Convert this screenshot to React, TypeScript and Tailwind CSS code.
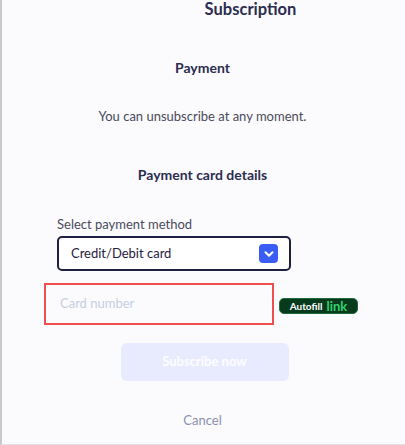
import { ChevronDown } from 'lucide-react';

export default function App() {
  return (
    <div className="w-[405px] h-[445px] bg-[#fbfbfe] border-l-2 border-l-[#c9c9cc] border-b border-b-[#e2e2e6] font-['Lato',sans-serif] text-[#2b2d4f] overflow-hidden">
      <div className="flex justify-center pl-[94px]">
        <h1 className="text-[16.5px] font-bold leading-[18px]">Subscription</h1>
      </div>

      <div className="flex flex-col items-center pr-[2px]">
        <h2 className="mt-[41px] text-[14px] font-bold leading-[18px]">Payment</h2>
        <p className="mt-[30px] text-[13px] leading-[18px] text-[#4a4a5a]">You can unsubscribe at any moment.</p>
        <h3 className="mt-[41px] text-[14px] font-bold leading-[18px]">Payment card details</h3>
      </div>

      <div className="ml-[55px] mt-[32px]">
        <label className="block text-[13px] leading-[16px] text-[#4a4a5a]">Select payment method</label>
        <div className="mt-[4px] w-[234px] h-[35px] border-2 border-[#1f2040] rounded-[5px] bg-white flex items-center justify-between pl-[12px] pr-[11px]">
          <span className="text-[13px] text-[#1f2040]">Credit/Debit card</span>
          <span className="w-[19px] h-[19px] rounded-[4px] bg-[#3a5cf7] flex items-center justify-center">
            <ChevronDown size={14} strokeWidth={3.5} color="#ffffff" />
          </span>
        </div>
      </div>

      <div className="flex items-center ml-[42px] mt-[12px]">
        <div className="w-[230px] h-[42px] border-2 border-[#f04f4f] flex items-center pl-[14px]">
          <span className="text-[13px] text-[#c6cee2]">Card number</span>
        </div>
        <span className="ml-[5px] mt-[4px] h-[16px] w-[79px] rounded-[5px] bg-[#083a1c] border border-[#1d6b3a] flex items-center justify-center gap-[4px] leading-none">
          <span className="text-[10px] font-bold text-white">Autofill</span>
          <span className="text-[13px] font-bold text-[#32d16f]">link</span>
        </span>
      </div>

      <div className="flex justify-center mt-[18px] pl-[2px]">
        <button className="w-[168px] h-[38px] rounded-[6px] bg-[#e8eafd] text-[13px] font-bold text-white/90">Subscribe now</button>
      </div>

      <div className="flex justify-center mt-[30px] pr-[2px]">
        <span className="text-[13px] text-[#8a8fae]">Cancel</span>
      </div>
    </div>
  );
}
